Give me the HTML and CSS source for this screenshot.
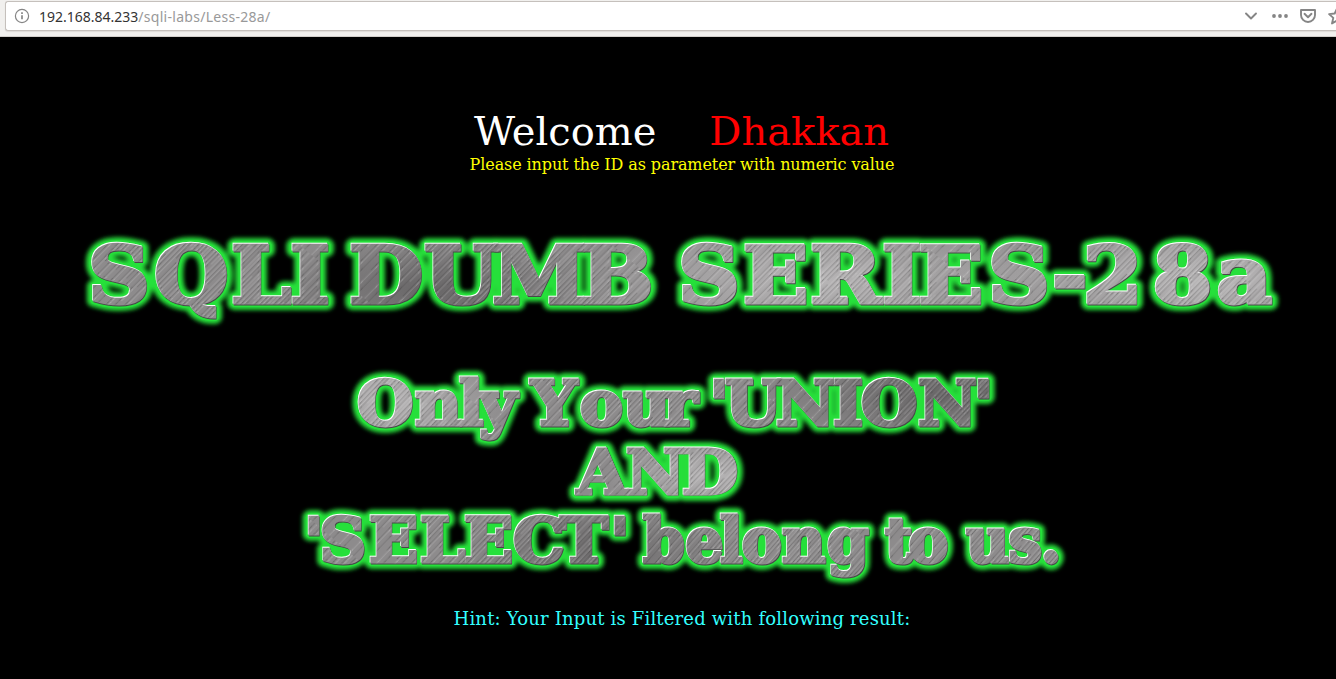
FILE: index.html
```html
<!DOCTYPE html>
<html lang="en">
<head>
<meta charset="utf-8">
<title>Less-28a</title>
<link rel="stylesheet" href="styles.css">
</head>
<body>
<header class="toolbar">
  <div class="urlbar">
    <svg class="info" viewBox="0 0 16 16" width="16" height="16"><circle cx="8" cy="8" r="6.6"/><path d="M8 7.3v4"/><path d="M8 4.3v1.7"/></svg>
    <div class="url"><span class="host">192.168.84.233</span><span class="path">/sqli-labs/Less-28a/</span></div>
    <svg class="actions" viewBox="0 0 96 30" width="96" height="30">
      <path d="M6 12.5l5 5 5-5"/>
      <g class="solid"><circle cx="34" cy="15" r="1.9"/><circle cx="40" cy="15" r="1.9"/><circle cx="46" cy="15" r="1.9"/></g>
      <path d="M61 9h14v5a7 7 0 0 1-14 0z"/><path d="M64.5 12.8l3.5 3.4 3.5-3.4"/>
      <path d="M97 7.5l-2.3 5-5.6.6 4.2 3.8-1.3 5.6 5-2.9"/>
    </svg>
  </div>
</header>
<main class="page">
  <div class="welcome"><span>Welcome</span><span class="name">Dhakkan</span></div>
  <p class="prompt">Please input the ID as parameter with numeric value</p>
  <svg class="banner" viewBox="0 220 1336 375" width="1336" height="375">
    <defs>
      <radialGradient id="bright"><stop offset="0" stop-color="#b8b6b7"/><stop offset="1" stop-color="#b8b6b7" stop-opacity="0"/></radialGradient>
      <radialGradient id="dim"><stop offset="0" stop-color="#686667"/><stop offset="1" stop-color="#686667" stop-opacity="0"/></radialGradient>
      <pattern id="metal" width="1400" height="700" patternUnits="userSpaceOnUse">
        <rect width="1400" height="700" fill="#8d8b8c"/>
        <ellipse cx="740" cy="280" rx="220" ry="70" fill="url(#bright)"/>
        <ellipse cx="1100" cy="280" rx="260" ry="70" fill="url(#bright)"/>
        <ellipse cx="370" cy="400" rx="110" ry="60" fill="url(#bright)"/>
        <ellipse cx="670" cy="475" rx="100" ry="45" fill="url(#bright)"/>
        <ellipse cx="390" cy="290" rx="150" ry="60" fill="url(#dim)"/>
        <ellipse cx="890" cy="395" rx="190" ry="55" fill="url(#dim)"/>
        <ellipse cx="590" cy="550" rx="170" ry="55" fill="url(#dim)"/>
      </pattern>
      <pattern id="brush" width="13" height="190" patternUnits="userSpaceOnUse" patternTransform="rotate(42)">
        <path class="light" d="M1 0v117M4 52v138M7.4 0v68M10.2 30v120"/>
        <path class="dark" d="M2.5 20v145M5.6 0v85M8.6 88v102M11.8 0v130"/>
      </pattern>
      <filter id="glow" x="-5%" y="-5%" width="110%" height="110%"><feGaussianBlur stdDeviation="1.9"/></filter>
      <g id="words">
        <g class="large" transform="scale(1.1 1)">
          <text y="303" x="80 140 210 263.6">SQLI</text>
          <text y="303" x="317.3 385.5 447.3 528.2">DUMB</text>
          <text y="303" x="616.4 675.5 736.4 801.8 834.5 898.2 956.4 984.5 1048 1106">SERIES-28a</text>
        </g>
        <g transform="scale(1.06 1)">
          <text y="425.2" x="337 391.5 433 452">Only</text>
          <text y="425.2" x="500.9 547.2 588 626">Your</text>
          <text y="425.2" x="669 684 732.1 785.8 812.3 866 918.5">'UNION'</text>
          <text y="493.7" x="544.3 590.6 643.4">AND</text>
          <text y="562" x="286.7 301.5 348.1 396.2 437.7 484 528.3 575.4">'SELECT'</text>
        </g>
        <g transform="scale(.98 1)">
          <text y="562" x="656.1 699.5 734.6 757 798 844">belong</text>
          <text y="562" x="903 927">to</text>
          <text y="562" x="985.7 1029 1062">us.</text>
        </g>
      </g>
    </defs>
    <use href="#words" class="halo" filter="url(#glow)"/>
    <use href="#words" class="edge"/>
    <use href="#words" class="shade" x=".6" y=".6"/>
    <use href="#words" class="shine" x="-.7" y="-.7"/>
    <use href="#words" class="face"/>
    <use href="#words" class="grain"/>
  </svg>
  <p class="hint">Hint: Your Input is Filtered with following result:</p>
</main>
</body>
</html>
```
FILE: styles.css
```css
body { margin: 0; background: #000; overflow: hidden; font-family: "DejaVu Serif", serif; }
.toolbar { box-sizing: border-box; height: 37px; padding: 1px 0 0 5px; background: #f1f0ee; border-bottom: 1px solid #d2cfcb; }
.urlbar { box-sizing: border-box; height: 30px; display: flex; align-items: center; padding-left: 8px; background: #fff; border: 1px solid #c5c0bc; border-right: 0; border-radius: 3px 0 0 3px; box-shadow: 0 1px 1px #dedbd8; }
.info { fill: none; stroke: #858585; stroke-width: 1.2; }
.info path { stroke-width: 1.7; }
.url { flex: 1; margin: 2px 0 0 9px; font: 14px/28px "Noto Sans", sans-serif; color: #999; white-space: nowrap; }
.host { color: #333; }
.path { letter-spacing: .28px; }
.actions { fill: none; stroke: #858585; stroke-width: 1.9; stroke-linejoin: round; stroke-linecap: round; }
.solid { fill: #858585; stroke: none; }
.page { display: flex; flex-direction: column; align-items: center; padding-top: 71px; }
.welcome { display: flex; gap: 53px; margin-left: 27px; font-size: 40px; line-height: 46px; color: #fff; }
.name { color: #f00; }
.prompt { margin: 1px 0 0 28px; font-size: 16px; line-height: 20px; letter-spacing: -.1px; color: #ff0; }
.banner { display: block; margin-top: 45px; font: bold 61px "DejaVu Serif", serif; }
.large { font-size: 78px; }
.halo { fill: #25e03a; stroke: #25e03a; stroke-width: 14; stroke-linejoin: round; }
.edge { fill: #25e03a; stroke: #25e03a; stroke-width: 8; stroke-linejoin: round; }
.shade { fill: #484848; stroke: #484848; stroke-width: 3; }
.shine { fill: #fff; stroke: #fff; stroke-width: 3; }
.face { fill: url(#metal); stroke: url(#metal); stroke-width: 3; }
.grain { fill: url(#brush); stroke: url(#brush); stroke-width: 3; }
.light { stroke: #fff; stroke-opacity: .23; stroke-width: .7; }
.dark { stroke: #222; stroke-opacity: .25; stroke-width: .7; }
.hint { margin: 13px 0 0 28px; font-size: 18px; line-height: 22px; letter-spacing: .18px; color: #3ff; }
```
